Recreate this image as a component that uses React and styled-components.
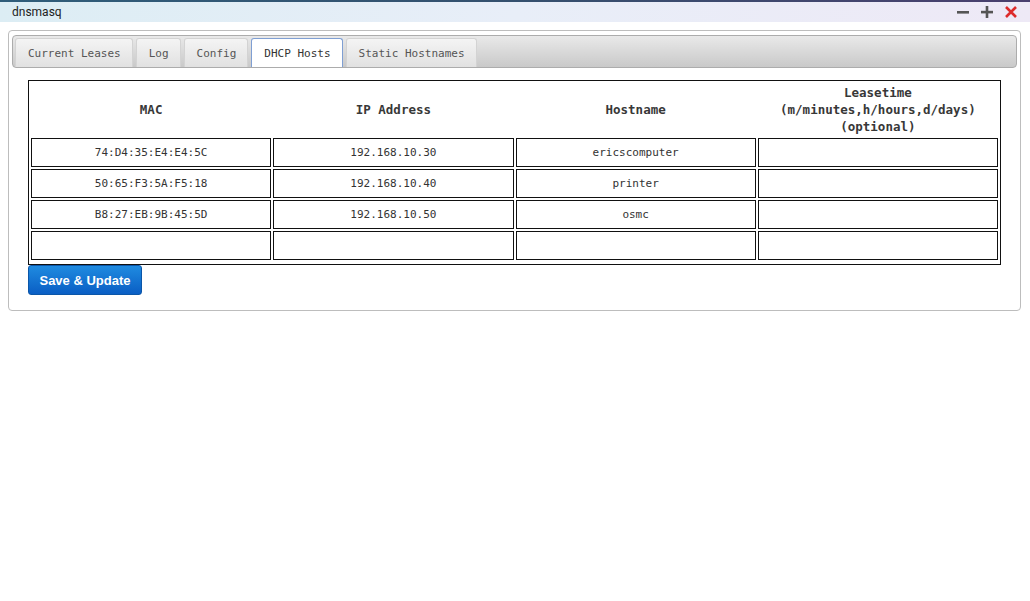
import React from "react";
import styled, { createGlobalStyle } from "styled-components";

const GlobalStyle = createGlobalStyle`
  body {
    margin: 0;
    background: #fff;
    font-family: "DejaVu Sans Mono", monospace;
  }
`;

const hosts = [
  { mac: "74:D4:35:E4:E4:5C", ip: "192.168.10.30", host: "ericscomputer", lease: "" },
  { mac: "50:65:F3:5A:F5:18", ip: "192.168.10.40", host: "printer", lease: "" },
  { mac: "B8:27:EB:9B:45:5D", ip: "192.168.10.50", host: "osmc", lease: "" },
  { mac: "", ip: "", host: "", lease: "" },
];

const tabs = ["Current Leases", "Log", "Config", "DHCP Hosts", "Static Hostnames"];

const Desktop = styled.div`
  height: 2px;
  background: linear-gradient(to right, #2f5d7a, #34506e 50%, #4a3f6e);
`;

const TitleBar = styled.div`
  height: 20px;
  display: flex;
  align-items: center;
  justify-content: space-between;
  padding: 0 12px 0 12px;
  background: linear-gradient(to right, #dcedf4, #e8eef8 50%, #eee9f6);
`;

const Title = styled.span`
  font-family: Roboto, "Liberation Sans", sans-serif;
  font-size: 12px;
  color: #222;
`;

const WinButtons = styled.div`
  display: flex;
  gap: 10px;
  align-items: center;
`;

const Panel = styled.div`
  margin: 8px 9px 0 8px;
  border: 1px solid #bdbdbd;
  border-radius: 4px;
  padding: 4px 3px 15px 3px;
`;

const TabBar = styled.div`
  height: 33px;
  display: flex;
  align-items: flex-end;
  gap: 3px;
  padding: 0 2px;
  border: 1px solid #acacac;
  border-radius: 4px;
  background: linear-gradient(to bottom, #e9e9e9, #c9c9c9);
  box-sizing: border-box;
`;

const Tab = styled.div`
  height: 29px;
  box-sizing: border-box;
  padding: 0 11px 0 12px;
  display: flex;
  align-items: center;
  font-size: 11px;
  color: ${(p) => (p.$active ? "#333" : "#555")};
  border: 1px solid ${(p) => (p.$active ? "#7f9fd3" : "#d3d3d3")};
  border-bottom: none;
  border-radius: 3px 3px 0 0;
  background: ${(p) =>
    p.$active ? "#fff" : "linear-gradient(to bottom, #f4f4f4, #e1e1e1)"};
`;

const Content = styled.div`
  padding: 12px 16px 0 16px;
`;

const Table = styled.table`
  width: 100%;
  table-layout: fixed;
  border: 1px solid #111;
  border-spacing: 2px;
  padding-bottom: 2px;
`;

const Th = styled.th`
  padding: 1px;
  font-size: 12.5px;
  line-height: 17px;
  font-weight: bold;
  color: #383838;
  text-align: center;
`;

const Td = styled.td`
  height: 27px;
  padding: 0;
  border: 1px solid #111;
  text-align: center;
  font-size: 11px;
  color: #333;
`;

const SaveButton = styled.button`
  width: 114px;
  height: 30px;
  margin-top: 0;
  padding: 0;
  display: block;
  white-space: nowrap;
  border: 1px solid #0b56a8;
  border-radius: 3px;
  background: linear-gradient(to bottom, #1f8be0, #0a5ec4);
  color: #fff;
  font-family: "Liberation Sans", Arial, sans-serif;
  font-weight: bold;
  font-size: 13px;
  cursor: pointer;
`;

const Icon = ({ children }) => (
  <svg width="14" height="14" viewBox="0 0 14 14">
    {children}
  </svg>
);

const App = () => {
  return (
    <>
      <GlobalStyle />
      <Desktop />
      <TitleBar>
        <Title>dnsmasq</Title>
        <WinButtons>
          <Icon>
            <rect x="1" y="6" width="12" height="2.6" fill="#555" />
          </Icon>
          <Icon>
            <rect x="1" y="5.8" width="12" height="2.6" fill="#555" />
            <rect x="5.7" y="1" width="2.6" height="12" fill="#555" />
          </Icon>
          <Icon>
            <path d="M2 2 L12 12 M12 2 L2 12" stroke="#dd2b2b" strokeWidth="2.6" />
          </Icon>
        </WinButtons>
      </TitleBar>
      <Panel>
        <TabBar>
          {tabs.map((t) => (
            <Tab key={t} $active={t === "DHCP Hosts"}>
              {t}
            </Tab>
          ))}
        </TabBar>
        <Content>
          <Table>
            <thead>
              <tr>
                <Th>MAC</Th>
                <Th>IP Address</Th>
                <Th>Hostname</Th>
                <Th>
                  Leasetime
                  <br />
                  (m/minutes,h/hours,d/days)
                  <br />
                  (optional)
                </Th>
              </tr>
            </thead>
            <tbody>
              {hosts.map((row, i) => (
                <tr key={i}>
                  <Td>{row.mac}</Td>
                  <Td>{row.ip}</Td>
                  <Td>{row.host}</Td>
                  <Td>{row.lease}</Td>
                </tr>
              ))}
            </tbody>
          </Table>
          <SaveButton>Save &amp; Update</SaveButton>
        </Content>
      </Panel>
    </>
  );
};

export default App;
